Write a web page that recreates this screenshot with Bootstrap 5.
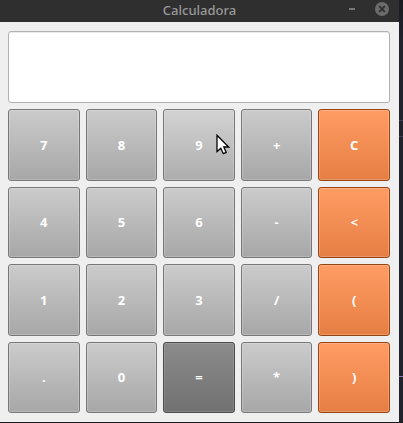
<!DOCTYPE html>
<html lang="es">
<head>
<meta charset="utf-8">
<meta name="viewport" content="width=device-width, initial-scale=1">
<title>Calculadora</title>
<link href="https://cdn.jsdelivr.net/npm/bootstrap@5.3.0/dist/css/bootstrap.min.css" rel="stylesheet">
<style>
body { background: #20232c; font-family: "Open Sans", "Noto Sans", sans-serif; }
.desktop { padding-bottom: 1px; background: #1b1b1d; }
.calc-window { background: #efefef; }
.title-bar { background: #2f2f2f; color: #999; height: 22px; padding: 0 10px; }
.title-text { font: 500 13px/20px "Noto Sans", sans-serif; }
.window-btn { width: 14px; height: 14px; line-height: 0; }
.title-side { gap: 16px; width: 44px; height: 18px; }
.calc-body { padding: 9px 9px 9px 8px; gap: 6px; }
.calc-display { height: 72px; border: 1px solid #b2b2b2; border-radius: 3px; box-shadow: inset 0 1px #ebebeb; font-size: 24px; }
.keypad { grid-template-columns: repeat(5, 1fr); grid-template-rows: repeat(4, 1fr); gap: 6px; }
.key {
  --edge: #777; --glow: #ffffff33;
  min-height: 48px; border: 1px solid var(--edge); border-radius: 3px; color: #fff;
  background: linear-gradient(#cbcbcb, #a7a7a7); box-shadow: inset 0 0 0 1px var(--glow);
  font-size: 13px; font-weight: 700; line-height: 18px;
}
.key-hover { background: linear-gradient(#d3d3d3, #adadad); }
.key-action { --edge: #964413; background: linear-gradient(#ff9c64, #e57e43); }
.key-equals { --edge: #4b4b4b; --glow: #ffffff1f; background: linear-gradient(#8b8b8b, #717171); }
.pointer { left: 52px; top: 24px; pointer-events: none; }
.side-strip { width: 4px; background: linear-gradient(#191b22, #20232c 40px, #20232c); }
.strip-line { height: 1px; background: #3a3f52; }
.strip-gap-a { height: 120px; }
.strip-gap-b { height: 15px; }
.strip-gap-c { height: 45px; }
.strip-accent { background: #8d79b8; }
</style>
</head>
<body>
<div class="desktop d-flex min-vh-100">
  <main class="calc-window d-flex flex-column flex-grow-1">
    <header class="title-bar d-flex align-items-start justify-content-between">
      <span class="title-side"></span>
      <h1 class="title-text m-0">Calculadora</h1>
      <div class="title-side d-flex align-items-center justify-content-end">
        <button type="button" class="window-btn border-0 bg-transparent p-0" aria-label="Minimizar">
          <svg width="14" height="14" viewBox="0 0 14 14" aria-hidden="true"><path d="M4 6h6v2H4z" fill="#777"/></svg>
        </button>
        <button type="button" class="window-btn border-0 bg-transparent p-0" aria-label="Cerrar">
          <svg width="14" height="14" viewBox="0 0 14 14" aria-hidden="true"><circle cx="7" cy="7" r="7" fill="#6b6b6b"/><path d="M4.2 4.2l5.6 5.6M9.8 4.2L4.2 9.8" stroke="#2f2f2f" stroke-width="1.8"/></svg>
        </button>
      </div>
    </header>
    <div class="calc-body d-flex flex-column flex-grow-1">
      <input type="text" class="calc-display w-100 bg-white px-2 text-end" aria-label="Pantalla">
      <div class="keypad d-grid flex-grow-1">
        <button type="button" class="key p-0">7</button>
        <button type="button" class="key p-0">8</button>
        <button type="button" class="key key-hover p-0 position-relative">9
          <svg class="pointer position-absolute" width="14" height="22" viewBox="0 0 14 22" aria-hidden="true"><path d="M1 1.2V17.6L4.8 14.2L7.3 19.7L10.2 18.4L7.8 13H12.6Z" fill="#fff" stroke="#000" stroke-width="1.3"/></svg>
        </button>
        <button type="button" class="key p-0">+</button>
        <button type="button" class="key key-action p-0">C</button>
        <button type="button" class="key p-0">4</button>
        <button type="button" class="key p-0">5</button>
        <button type="button" class="key p-0">6</button>
        <button type="button" class="key p-0">-</button>
        <button type="button" class="key key-action p-0">&lt;</button>
        <button type="button" class="key p-0">1</button>
        <button type="button" class="key p-0">2</button>
        <button type="button" class="key p-0">3</button>
        <button type="button" class="key p-0">/</button>
        <button type="button" class="key key-action p-0">(</button>
        <button type="button" class="key p-0">.</button>
        <button type="button" class="key p-0">0</button>
        <button type="button" class="key key-equals p-0">=</button>
        <button type="button" class="key p-0">*</button>
        <button type="button" class="key key-action p-0">)</button>
      </div>
    </div>
  </main>
  <div class="side-strip d-flex flex-column" aria-hidden="true">
    <div class="strip-gap-a"></div>
    <div class="strip-line"></div>
    <div class="strip-gap-b"></div>
    <div class="strip-line"></div>
    <div class="strip-line strip-accent mt-auto"></div>
    <div class="strip-gap-c"></div>
  </div>
</div>
<script src="https://cdn.jsdelivr.net/npm/bootstrap@5.3.0/dist/js/bootstrap.bundle.min.js"></script>
</body>
</html>
